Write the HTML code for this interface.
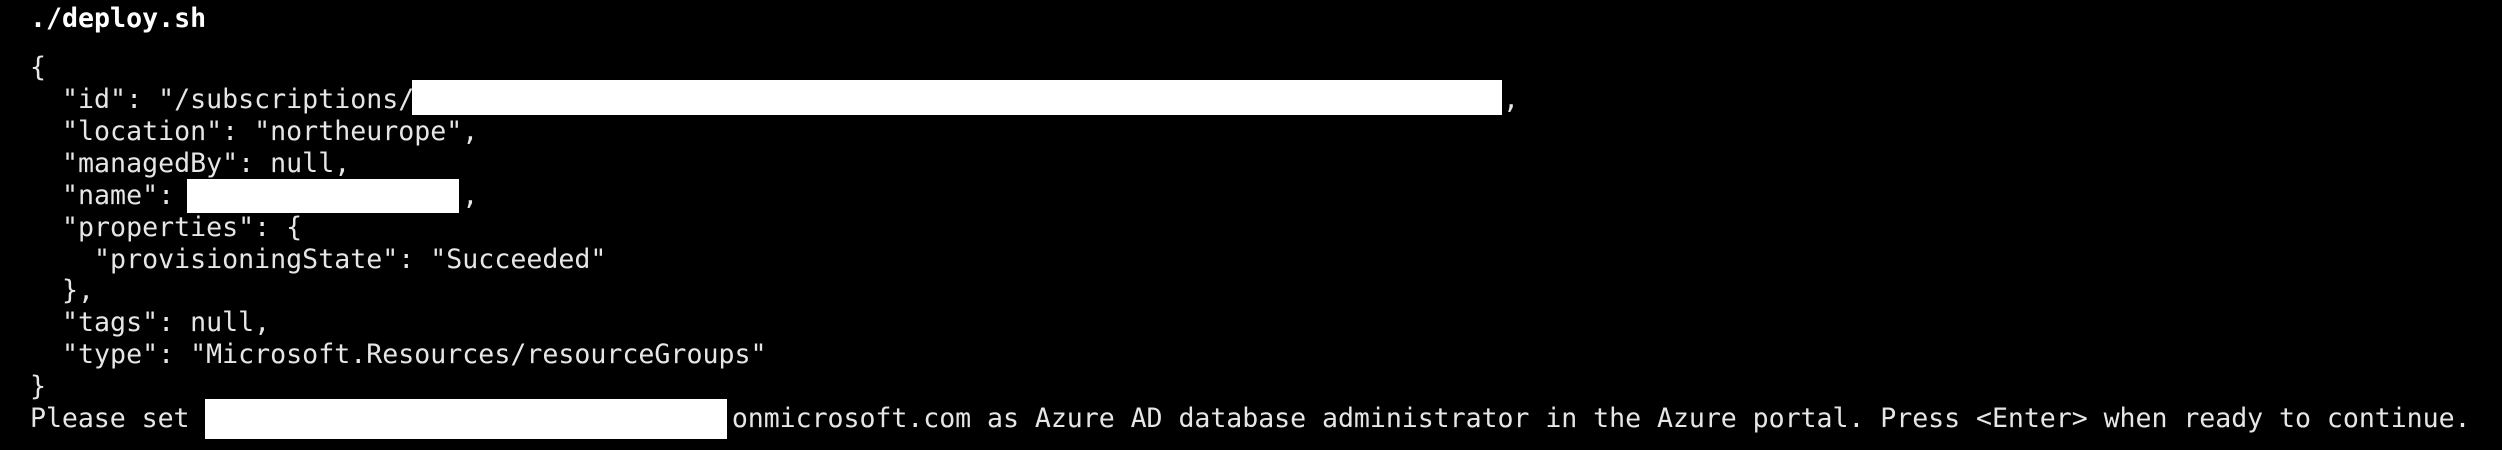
<!DOCTYPE html>
<html><head><meta charset="utf-8"><style>
html,body{margin:0;padding:0;background:#000;width:2502px;height:450px;overflow:hidden}
.t{position:absolute;left:30px;top:52px;font-family:"DejaVu Sans Mono","Liberation Mono",monospace;font-size:26.6px;line-height:31.92px;color:#e6e6e6;white-space:pre}
.h{position:absolute;left:30px;top:3px;font-family:"DejaVu Sans Mono","Liberation Mono",monospace;font-size:26.6px;line-height:32px;color:#fff;font-weight:bold;white-space:pre}
.r{position:absolute;background:#fff}
.l{letter-spacing:-0.06px}
</style></head><body>
<div class="h">./deploy.sh</div>
<div class="t">{
  "id": "/subscriptions/                                                                    ,
  "location": "northeurope",
  "managedBy": null,
  "name":                  ,
  "properties": {
    "provisioningState": "Succeeded"
  },
  "tags": null,
  "type": "Microsoft.Resources/resourceGroups"
}
<span class="l">Please set                                 .onmicrosoft.com as Azure AD database administrator in the Azure portal. Press &lt;Enter&gt; when ready to continue.</span></div>
<div class="r" style="left:412px;top:80px;height:35px;width:1090px"></div>
<div class="r" style="left:187px;top:179px;width:272px;height:34px"></div>
<div class="r" style="left:205px;top:399px;width:522px;height:40px"></div>
</body></html>
